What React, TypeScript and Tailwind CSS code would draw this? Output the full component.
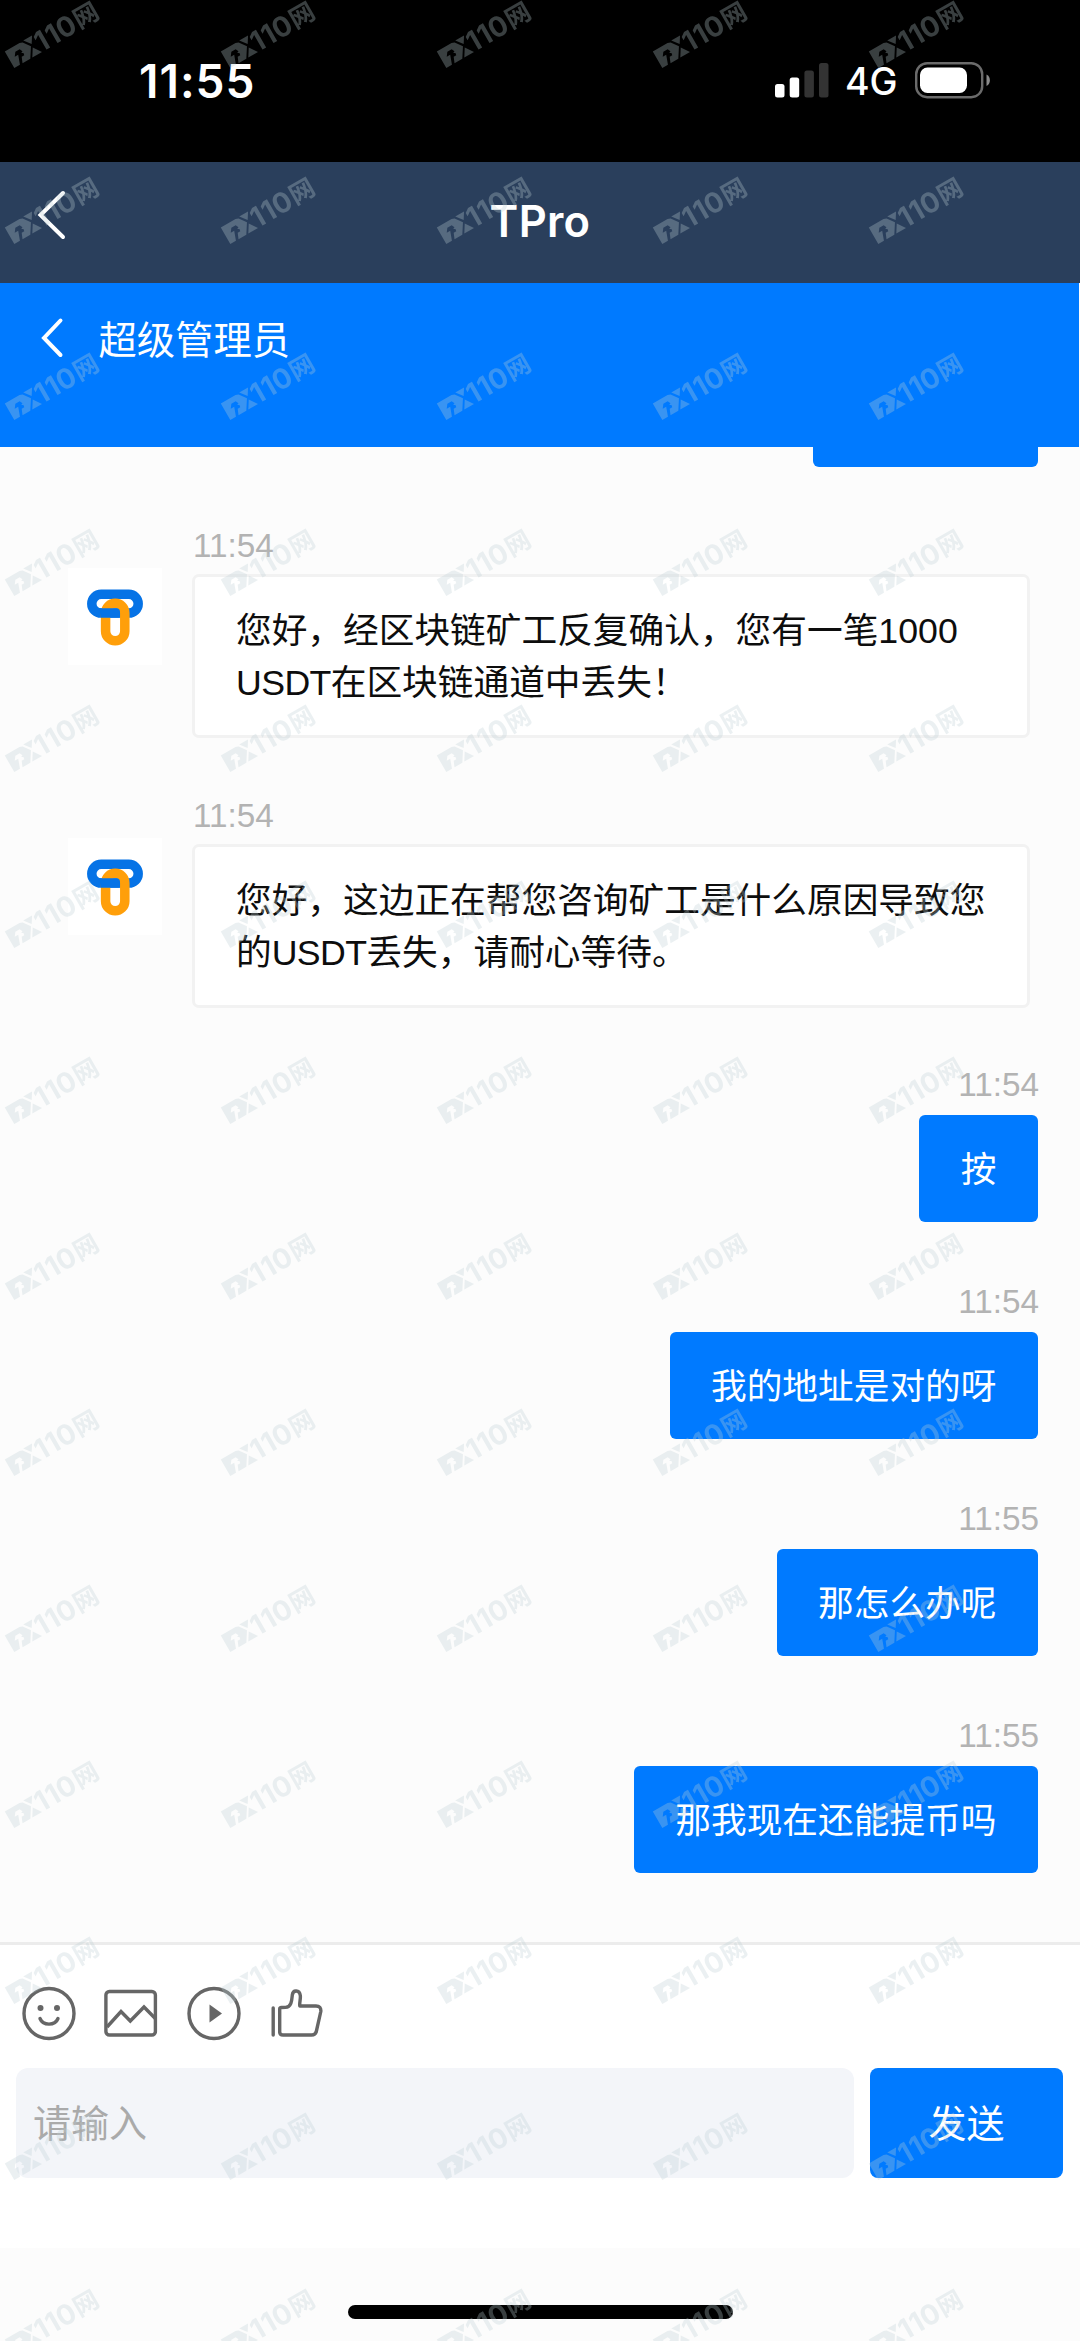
import { useId, useState } from "react";

interface Message {
  id: number;
  from: "agent" | "me";
  time: string;
  lines: string[];
}

const messages: Message[] = [
  {
    id: 1,
    from: "agent",
    time: "11:54",
    lines: ["您好，经区块链矿工反复确认，您有一笔1000", "USDT在区块链通道中丢失！"],
  },
  {
    id: 2,
    from: "agent",
    time: "11:54",
    lines: ["您好，这边正在帮您咨询矿工是什么原因导致您", "的USDT丢失，请耐心等待。"],
  },
  { id: 3, from: "me", time: "11:54", lines: ["按"] },
  { id: 4, from: "me", time: "11:54", lines: ["我的地址是对的呀"] },
  { id: 5, from: "me", time: "11:55", lines: ["那怎么办呢"] },
  { id: 6, from: "me", time: "11:55", lines: ["那我现在还能提币吗"] },
];

function StatusBar() {
  return (
    <div className="flex h-[162px] shrink-0 items-start justify-between bg-black pr-[90px] pl-[139px] font-['Inter','Liberation_Sans',sans-serif] text-white">
      <span className="mt-[53px] text-[46px] leading-[57px] font-semibold tracking-[1px]">
        11:55
      </span>
      <div className="mt-[61px] flex h-[38px] items-center">
        <svg className="h-[38px] w-[54px]" viewBox="0 0 54 38">
          <rect x="0" y="23" width="9.5" height="13.5" rx="2.5" fill="#fff" />
          <rect x="14.7" y="16.5" width="9.5" height="20" rx="2.5" fill="#fff" />
          <rect x="29.4" y="9.5" width="9.5" height="27" rx="2.5" fill="#333" />
          <rect x="44" y="2" width="9.5" height="34.5" rx="2.5" fill="#333" />
        </svg>
        <span className="ml-[16px] w-[70px] pt-[3px] text-[37.5px] leading-[38px] font-medium">
          4G
        </span>
        <svg className="h-[38px] w-[75px]" viewBox="0 0 75 38">
          <rect x="1.2" y="2.2" width="66" height="34" rx="11" fill="none" stroke="#6b6b6b" strokeWidth="2.4" />
          <rect x="5" y="6.5" width="47" height="25.5" rx="7.5" fill="#fff" />
          <path d="M71.5 13.5c4.5 2 4.5 9.5 0 11.5z" fill="#8a8a8a" />
        </svg>
      </div>
    </div>
  );
}

function AppHeader() {
  return (
    <header className="grid h-[121px] shrink-0 grid-cols-[1fr_auto_1fr] items-start bg-[#2a3f5c] text-white">
      <button type="button" aria-label="返回" className="mt-[26px] ml-[36px] w-fit">
        <svg className="h-[54px] w-[32px]" viewBox="0 0 32 54" fill="none" stroke="currentColor" strokeWidth="4" strokeLinecap="round">
          <path d="M27 5L4.5 27L27 49" />
        </svg>
      </button>
      <h1 className="mt-[32px] font-['Inter','Liberation_Sans',sans-serif] text-[43.5px] leading-[54px] font-semibold tracking-[0.3px]">
        TPro
      </h1>
    </header>
  );
}

function ChatHeader() {
  return (
    <div className="mr-px flex h-[164px] shrink-0 items-start bg-[#007aff] text-white">
      <svg className="mt-[32px] ml-[38px] h-[46px] w-[28px]" viewBox="0 0 28 46" fill="none" stroke="currentColor" strokeWidth="4" strokeLinecap="round">
        <path d="M22.5 5.5L6 23L22.5 40" />
      </svg>
      <span className="mt-[31px] ml-[32.5px] text-[38.3px] leading-[54px]">超级管理员</span>
    </div>
  );
}

// Two interlocked links that form the letter T
function Avatar() {
  return (
    <svg className="h-[97px] w-[94px] shrink-0 bg-white" viewBox="68 568 94 97" fill="none">
      <rect x="91.8" y="594.3" width="46.4" height="18.8" rx="9.4" stroke="#0673e6" strokeWidth="9.5" />
      <rect x="105.6" y="603.3" width="19.2" height="37.5" rx="9.6" stroke="#ff9f0a" strokeWidth="9.5" />
      <path d="M99 608.3H116.5Q119.8 608.3 119.8 611.5V617.8H101Z" fill="#0673e6" />
    </svg>
  );
}

function MessageTime({ value }: { value: string }) {
  return <time className="block h-[44px] text-[33.3px] leading-[44px] text-[#b3b3b3]">{value}</time>;
}

function AgentMessage({ message }: { message: Message }) {
  return (
    <div className="mt-[56px] flex pl-[68px]">
      <div className="mt-[44px]">
        <Avatar />
      </div>
      <div className="ml-[30px]">
        <div className="pl-px">
          <MessageTime value={message.time} />
        </div>
        <div className="mt-[6px] h-[164px] w-[838px] rounded-[7px] border-[3px] border-[#f2f2f2] bg-white pt-[28px] pl-[41px] text-[35.7px] leading-[52px] text-[#0d0d0d]">
          {message.lines.map((line) => (
            <p key={line} className="whitespace-nowrap">
              {line.split(/(USDT)/).map((part) =>
                part === "USDT" ? (
                  <span key={part} className="tracking-[-0.6px]">
                    {part}
                  </span>
                ) : (
                  part
                ),
              )}
            </p>
          ))}
        </div>
      </div>
    </div>
  );
}

function MyMessage({ message }: { message: Message }) {
  return (
    <div className="mt-[58px] flex flex-col items-end pr-[41px]">
      <MessageTime value={message.time} />
      <div className="mt-[8px] mr-px h-[107px] rounded-[6px] bg-[#007aff] px-[41.5px] pt-[28px] text-[35.7px] leading-[54px] text-white">
        {message.lines[0]}
      </div>
    </div>
  );
}

function Toolbar() {
  return (
    <div className="flex h-[60px] items-center gap-[26.3px] pl-[21px] text-[#666]">
      <svg className="h-[60px] w-[56px]" viewBox="0 0 56 60" fill="none" stroke="currentColor" strokeWidth="3.4">
        <circle cx="28" cy="30.5" r="25" />
        <circle cx="19.5" cy="25" r="3" fill="currentColor" stroke="none" />
        <circle cx="36" cy="25" r="3" fill="currentColor" stroke="none" />
        <path d="M19 35.5C22 43 34 43 37 35.5" strokeLinecap="round" />
      </svg>
      <svg className="h-[60px] w-[56px]" viewBox="0 0 56 60" fill="none" stroke="currentColor" strokeWidth="3.4">
        <rect x="2.9" y="8.5" width="49.5" height="43.5" rx="3.5" />
        <path d="M4 44L18 28.5L27.3 38L41 24L52.3 35.5" />
      </svg>
      <svg className="h-[60px] w-[56px]" viewBox="0 0 56 60" fill="none" stroke="currentColor" strokeWidth="3.4">
        <circle cx="28" cy="30.5" r="25" />
        <path d="M23.5 21.5V39.5L36 30.5Z" fill="currentColor" stroke="none" />
      </svg>
      <svg className="h-[60px] w-[56px]" viewBox="0 0 56 60" fill="none" stroke="currentColor" strokeWidth="3.4" strokeLinejoin="round" strokeLinecap="round">
        <path d="M5.2 25V52" />
        <path d="M11.7 26V49Q11.7 52 15 52H43.5Q47.5 52 48.3 48.5L52.8 28.5Q53.3 23 48 23H31.8C31.3 19.5 32.8 16 32.3 12.5C31.5 6.5 24.8 6.5 24.3 12C23.8 17.5 23.3 24.2 17.5 24.4L13.5 24.5Q11.7 24.6 11.7 26Z" />
      </svg>
    </div>
  );
}

function Composer() {
  const [text, setText] = useState("");

  return (
    <footer className="h-[306px] shrink-0 border-t-[3px] border-[#ececec] bg-white pt-[38px]">
      <Toolbar />
      <form className="mt-[25px] flex h-[110px] gap-[16px] pr-[17px] pl-[16px]" onSubmit={(e) => e.preventDefault()}>
        <input
          value={text}
          onChange={(e) => setText(e.target.value)}
          placeholder="请输入"
          className="min-w-0 flex-1 rounded-[12px] bg-[#f3f5f9] px-[17px] pt-[3px] text-[38px] text-[#333] outline-none placeholder:text-[#aaa]"
        />
        <button type="submit" className="w-[193px] rounded-[8px] bg-[#007aff] pt-[3px] text-[38px] text-white">
          发送
        </button>
      </form>
    </footer>
  );
}

// Diagonal brand mark repeated over the whole screen
function Watermark() {
  const id = useId();
  return (
    <svg className="pointer-events-none absolute inset-0 h-full w-full opacity-30" aria-hidden="true">
      <defs>
        <pattern id={id} width="216" height="176" patternUnits="userSpaceOnUse">
          <g transform="translate(14.300 68) rotate(-30)" fill="#bed0d5">
            <path
              fillRule="evenodd"
              d="M0 0V-19H17L20 -18L25.300 -10.500L18.500 0ZM6.500 0H9.500L12 -6H15L15.500 -8.500L13.500 -9.500L15.500 -10.500L14 -13.500H9L6 -9.500H10Z"
            />
            <path d="M21.500 -19.300H31.600L27 -12Z" />
            <path d="M26.200 -8.500L32 0H20.800Z" />
            <g fontFamily="Inter, sans-serif" fontWeight="700" fontSize="28">
              <text x="31" y="0">1</text>
              <text x="43.800" y="0">1</text>
              <text x="56" y="0">0</text>
            </g>
            <text x="76" y="-1" fontFamily="'Noto Sans CJK SC', sans-serif" fontWeight="700" fontSize="25">
              网
            </text>
          </g>
        </pattern>
      </defs>
      <rect width="100%" height="100%" fill={`url(#${id})`} />
    </svg>
  );
}

export default function App() {
  return (
    <div className="relative flex h-[2341px] w-[1080px] flex-col overflow-hidden bg-[#fcfcfc] font-['Liberation_Sans','Noto_Sans_CJK_SC',sans-serif]">
      <StatusBar />
      <AppHeader />
      <ChatHeader />

      <main className="h-[1495px] shrink-0 overflow-hidden">
        {/* Tail of the message scrolled under the header */}
        <div className="mr-[42px] mb-[57px] ml-auto h-[20px] w-[225px] rounded-b-[6px] bg-[#007aff]" />
        <section className="[&>*:first-child]:mt-0 [&>*:nth-child(3)]:mt-[55px]">
          {messages.map((message) =>
            message.from === "agent" ? (
              <AgentMessage key={message.id} message={message} />
            ) : (
              <MyMessage key={message.id} message={message} />
            ),
          )}
        </section>
      </main>

      <Composer />

      <div className="flex flex-1 items-end justify-center pb-[22px]">
        <div className="h-[14px] w-[385px] rounded-full bg-black" />
      </div>
      <Watermark />
    </div>
  );
}
